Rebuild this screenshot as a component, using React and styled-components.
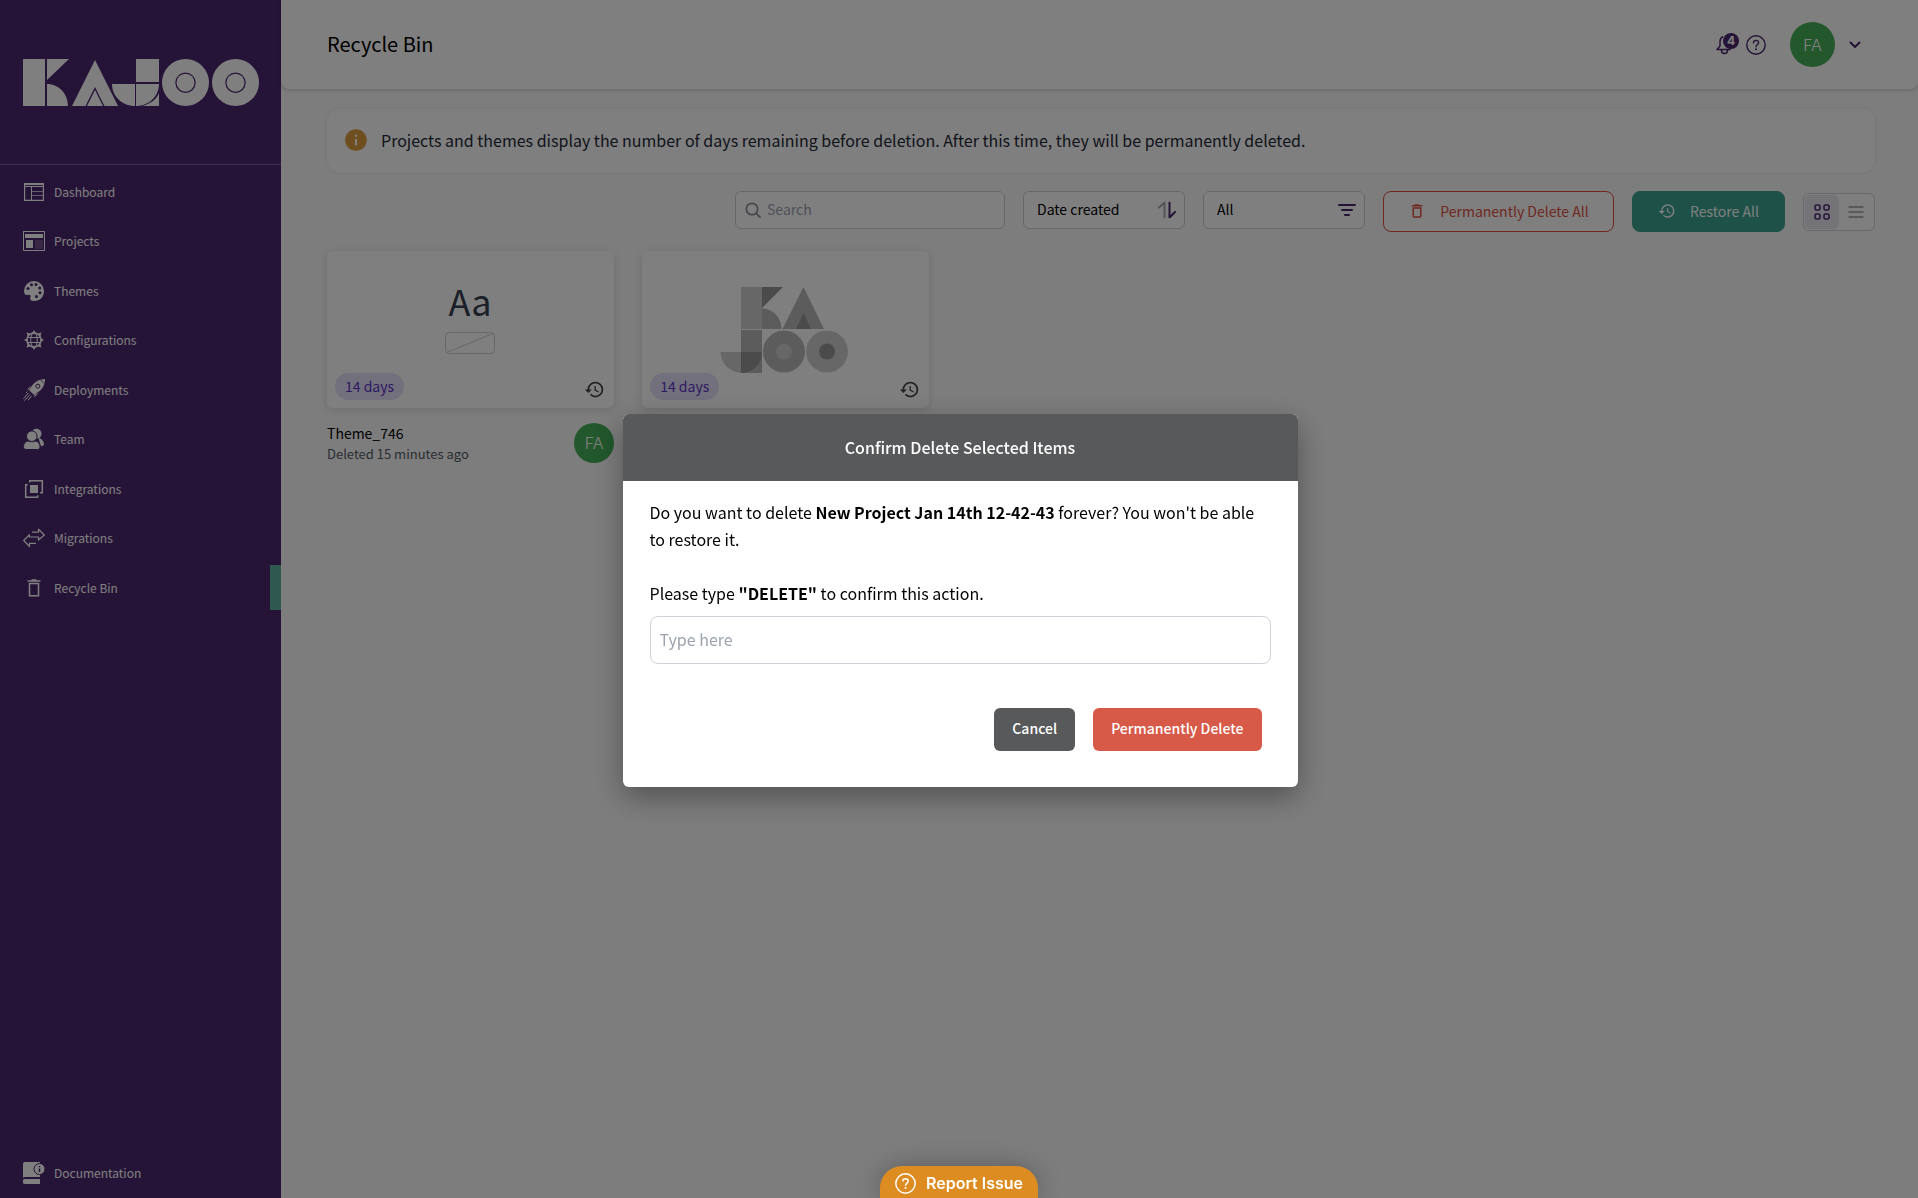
import React from 'react'
import styled, { createGlobalStyle } from 'styled-components'
import { MdHistory, MdInfo, MdOutlineDelete } from 'react-icons/md'

const GlobalStyle = createGlobalStyle`
  *,
  *::before,
  *::after {
    box-sizing: border-box;
  }
  body {
    margin: 0;
    background-color: #fafafa;
    color: #000;
    font-family: 'Noto Sans CJK JP', 'Noto Sans', sans-serif;
    font-size: 16px;
    line-height: 24px;
  }
  h1, h2, h3, p, ul {
    margin: 0;
    padding: 0;
  }
  button, input, select {
    font: inherit;
  }
  svg {
    display: block;
    flex-shrink: 0;
  }
`

const Layout = styled.div`
  display: flex;
  min-height: 100vh;
`

/* sidebar */

const Sidebar = styled.nav`
  display: flex;
  flex-direction: column;
  width: 281px;
  flex-shrink: 0;
  background-color: #4c2870;
  color: white;
`

const LogoBox = styled.div`
  height: 165px;
  padding: 59px 22px 0 23px;
  border-bottom: 1px solid #7e5a94;
`

const NavList = styled.ul`
  display: flex;
  flex-direction: column;
  justify-content: space-between;
  height: 441px;
  margin-top: 4px;
  list-style: none;
`

const NavLink = styled.a`
  display: flex;
  align-items: center;
  gap: 9px;
  height: 45px;
  padding-left: 23px;
  color: white;
  font-size: 12px;
  text-decoration: none;
  border-right: 11px solid ${(props) => (props.$active ? '#5eb29e' : 'transparent')};
`

const NavFooter = styled.div`
  margin-top: auto;
  padding-bottom: 3px;
`

/* page */

const Page = styled.div`
  flex: 1;
  min-width: 0;
`

const Header = styled.header`
  display: flex;
  align-items: center;
  height: 89px;
  padding: 0 57px 0 46px;
  background-color: white;
  border-radius: 0 0 8px 8px;
  box-shadow: 0 1px 4px rgba(0, 0, 0, 0.2);
`

const PageTitle = styled.h1`
  margin-right: auto;
  padding-bottom: 2px;
  font-size: 20px;
  font-weight: 400;
`

const IconButton = styled.button`
  position: relative;
  display: flex;
  padding: 0;
  border: 0;
  background: none;
  color: #4c2870;
  cursor: pointer;
`

const HeaderIcons = styled.div`
  display: flex;
  align-items: center;
  gap: 8px;
  margin-right: 24px;
`

const Badge = styled.span`
  position: absolute;
  top: -1px;
  right: -1px;
  width: 16px;
  height: 16px;
  border-radius: 50%;
  background-color: #4c2870;
  color: white;
  font-family: Inter, sans-serif;
  font-size: 12px;
  font-weight: 700;
  line-height: 16px;
  text-align: center;
`

const Avatar = styled.span`
  display: flex;
  align-items: center;
  justify-content: center;
  width: ${(props) => props.$size};
  height: ${(props) => props.$size};
  flex-shrink: 0;
  border-radius: 50%;
  background-color: #45b058;
  color: white;
  font-family: Inter, sans-serif;
  font-size: 16px;
  font-weight: 300;
`

const UserMenu = styled(IconButton)`
  align-items: center;
  gap: 14px;
`

const Content = styled.main`
  padding: 20px 43px 20px 46px;
`

const Notice = styled.div`
  display: flex;
  align-items: center;
  gap: 12px;
  height: 64px;
  padding: 0 16px 2px;
  background-color: white;
  border-radius: 14px;
  box-shadow: 0 0 4px rgba(0, 0, 0, 0.08);
  color: #1f2937;
  font-size: 16px;
`

const Toolbar = styled.div`
  display: flex;
  align-items: flex-start;
  justify-content: flex-end;
  gap: 18px;
  margin: 18px 0 19px;
  font-size: 14px;
`

const Field = styled.label`
  position: relative;
  width: ${(props) => props.$width};
  height: 38px;

  svg {
    position: absolute;
    top: 50%;
    transform: translateY(-50%);
    pointer-events: none;
    ${(props) => (props.$iconLeft ? 'left: 10px;' : 'right: 9px;')}
  }
`

const SearchInput = styled.input`
  width: 100%;
  height: 100%;
  padding: 0 12px 2px 31px;
  border: 1px solid #d1d1d4;
  border-radius: 6px;
  background-color: white;
  &::placeholder {
    color: #9ca3af;
    opacity: 1;
  }
`

const Select = styled.select`
  width: 100%;
  height: 100%;
  padding: 0 32px 2px 13px;
  appearance: none;
  border: 1px solid #d1d1d4;
  border-radius: 6px;
  background-color: white;
  color: black;
`

const ActionButton = styled.button`
  display: flex;
  align-items: center;
  justify-content: center;
  gap: 14px;
  width: ${(props) => props.$width};
  height: 41px;
  padding: 0 0 2px;
  border: 1px solid ${(props) => (props.$danger ? '#e04f3f' : '#3da592')};
  border-radius: 8px;
  background-color: ${(props) => (props.$danger ? 'white' : '#3da592')};
  color: ${(props) => (props.$danger ? '#e0503f' : 'white')};
  cursor: pointer;
`

const ViewToggle = styled.div`
  display: flex;
  align-self: center;
  width: 72px;
  height: 38px;
  padding: 1px;
  border: 1px solid #d1d1da;
  border-radius: 6px;
  background-color: white;
`

const ToggleButton = styled.button`
  display: flex;
  flex: 1;
  align-items: center;
  justify-content: center;
  padding: 0;
  border: 0;
  border-radius: 5px;
  background-color: ${(props) => (props.$active ? '#e9e8f0' : 'transparent')};
  color: ${(props) => (props.$active ? '#4c2870' : '#9c9aa8')};
`

const CardGrid = styled.div`
  display: grid;
  grid-template-columns: repeat(5, 1fr);
  gap: 28px;
`

const Card = styled.article`
  display: flex;
  flex-direction: column;
  height: 157px;
  padding: 8px 9px 8px 8px;
  background-color: white;
  border-radius: 6px;
  box-shadow: 0 2px 8px rgba(0, 0, 0, 0.12);
`

const Preview = styled.div`
  display: flex;
  flex: 1;
  flex-direction: column;
  align-items: center;
  gap: 8px;
  padding-top: ${(props) => props.$top};
  height: 0;
`

const FontSample = styled.span`
  color: #374151;
  font-size: 36px;
  line-height: 48px;
`

const CardFooter = styled.div`
  display: flex;
  align-items: flex-end;
  justify-content: space-between;
`

const DaysPill = styled.span`
  padding: 0 10px;
  border-radius: 14px;
  background-color: #e6e0fb;
  color: #5b34c4;
  font-size: 14px;
  line-height: 27px;
`

const RestoreButton = styled(IconButton)`
  color: #444;
`

const Caption = styled.div`
  display: flex;
  justify-content: space-between;
  margin-top: 15px;
`

const CaptionTitle = styled.h3`
  font-size: 14px;
  font-weight: 400;
  line-height: 20px;
`

const CaptionMeta = styled.p`
  color: #555b66;
  font-size: 13px;
  line-height: 22px;
`

/* dialog */

const Overlay = styled.div`
  position: fixed;
  inset: 0;
  display: flex;
  align-items: center;
  justify-content: center;
  padding: 2px 0 0 2px;
  background-color: rgba(0, 0, 0, 0.5);
  z-index: 10;
`

const Dialog = styled.section`
  width: 675px;
  overflow: hidden;
  border-radius: 6px;
  background-color: white;
  box-shadow: 0 10px 30px rgba(0, 0, 0, 0.35);
`

const DialogTitle = styled.h2`
  background-color: #58595b;
  color: white;
  font-size: 16px;
  font-weight: 500;
  line-height: 67px;
  text-align: center;
`

const DialogBody = styled.form`
  padding: 18px 27px 36px;
  line-height: 27px;
`

const ConfirmLabel = styled.label`
  display: block;
  margin-top: 27px;
`

const ConfirmInput = styled.input`
  width: 100%;
  height: 48px;
  margin-top: 9px;
  padding: 0 9px 2px;
  border: 1px solid #d1d1da;
  border-radius: 8px;
  &::placeholder {
    color: #9ca3af;
    opacity: 1;
  }
`

const DialogActions = styled.div`
  display: flex;
  justify-content: flex-end;
  gap: 18px;
  margin: 44px 9px 0 0;
`

const DialogButton = styled.button`
  height: 43px;
  padding: 0 18px 2px;
  border: 0;
  border-radius: 6px;
  background-color: ${(props) => (props.$danger ? '#d75a48' : '#58595b')};
  color: white;
  font-size: 14px;
  font-weight: 500;
  cursor: pointer;
`

const ReportButton = styled.button`
  position: fixed;
  bottom: 0;
  left: 50%;
  display: flex;
  align-items: center;
  gap: 10px;
  height: 32px;
  padding: 2px 15px 0;
  transform: translateX(-50%);
  border: 0;
  border-radius: 22px 22px 0 0;
  background-color: #dc8c20;
  box-shadow: 0 0 24px rgba(0, 0, 0, 0.25);
  color: white;
  font-family: Inter, sans-serif;
  font-size: 16px;
  font-weight: 600;
  white-space: nowrap;
  z-index: 20;
`

/* drawings */

const KajooLogo = () => (
  <svg width="236" height="47" viewBox="0 0 236 47" fill="white" role="img" aria-label="Kajoo">
    <path d="M0 0h22v47H0zM24 0h22L24 21zM24 25c12 0 21 10 21 22H24z" />
    <path d="M72 1l23 46H81.500L72 28 62.500 47H49z" />
    <path d="M72 31l8 16H64z" />
    <path d="M113 0h23v23h-23zM89 25h23v22C99 47 89 37 89 25zM113 25h23c0 12-10 22-23 22z" />
    <path d="M136 34v13h-17c8-2 14-6 17-13z" />
    <path
      fillRule="evenodd"
      d="M162.500 0a23.500 23.500 0 1 0 0 47a23.500 23.500 0 1 0 0-47zm0 13.500a10.200 10.200 0 1 1 0 20.400a10.200 10.200 0 1 1 0-20.400zM212.500 0a23.500 23.500 0 1 0 0 47a23.500 23.500 0 1 0 0-47zm0 13.500a10.200 10.200 0 1 1 0 20.400a10.200 10.200 0 1 1 0-20.400z"
    />
    <circle cx="162.500" cy="23.700" r="9" />
    <circle cx="212.500" cy="23.700" r="9" />
  </svg>
)

const KajooMark = () => (
  <svg width="130" height="86" viewBox="0 0 130 86" fill="#b8b8b8" aria-hidden="true">
    <path fill="#cfcfcf" d="M21 0h21v42H21z" />
    <path fill="#969696" d="M42 0h21L42 21z" />
    <path d="M42 21.500c11 0 19.500 9 19.500 20.500H42zM83.500 0L104 42H62.500z" />
    <path fill="#969696" d="M83.500 26L91 42H76z" />
    <path d="M21 43h21v43H21z" />
    <path fill="#cfcfcf" d="M.5 65H21v21C9 85 .5 76 .5 65z" />
    <path fill="#969696" d="M21 65h21c0 12-9 21-21 21z" />
    <circle cx="64" cy="64.500" r="21" />
    <circle cx="64" cy="64.500" r="8" fill="#cfcfcf" />
    <circle cx="107" cy="64.500" r="21" fill="#cfcfcf" />
    <circle cx="107" cy="64.500" r="8" fill="#969696" />
  </svg>
)

const NavIcon = ({ children }) => (
  <svg width="22" height="22" viewBox="0 0 22 22" fill="none" stroke="currentColor" aria-hidden="true">
    {children}
  </svg>
)

const DashboardIcon = () => (
  <NavIcon>
    <path strokeWidth="1.200" d="M1.600 2.600h18.800v16.800H1.600z" />
    <path strokeWidth="1" d="M2 3.500h18M2 5.500h18M8.500 6v13" />
    <path strokeWidth="0.700" d="M9 10.500h11M9 14.500h11" />
  </NavIcon>
)

const ProjectsIcon = () => (
  <NavIcon>
    <path strokeWidth="1" d="M.5 1.500h21v19H.500zM1 1.500h20" />
    <path fill="currentColor" stroke="none" d="M2 4h18v4H2zM3 10h7v8H3zM0 1h6v1H0z" />
    <path fill="currentColor" stroke="none" opacity="0.2" d="M12 10h8v9h-8z" />
  </NavIcon>
)

const ThemesIcon = () => (
  <NavIcon>
    <path
      fill="currentColor"
      stroke="none"
      d="M11 1a10 10 0 0 1 10 10c0 6-4 10-10 10-2.500 0-3.800-.8-3.800-2.500 0-1.500 1-2.500-.2-3.500-1.500-1-3 .8-4.500-.3C1.400 13.800 1 12.500 1 11A10 10 0 0 1 11 1z"
    />
    <g fill="#4c2870" stroke="none">
      <circle cx="5" cy="8.500" r="1.500" />
      <circle cx="8.500" cy="4.800" r="1.500" />
      <circle cx="13" cy="4.500" r="1.500" />
      <circle cx="16.700" cy="8" r="1.500" />
      <circle cx="17" cy="12.800" r="1.500" />
      <circle cx="13.500" cy="16.500" r="1.500" />
    </g>
  </NavIcon>
)

const ConfigurationsIcon = () => (
  <NavIcon>
    <circle cx="11" cy="11" r="7" strokeWidth="1.500" />
    <ellipse cx="11" cy="11" rx="3.300" ry="7" strokeWidth="1" />
    <path strokeWidth="1" d="M4.500 8.500h13M4.500 13.500h13" />
    <path
      fill="currentColor"
      stroke="none"
      d="M11 1l1.800 3H9.200zM11 21l1.800-3H9.200zM1 11l3-1.800v3.600zM21 11l-3-1.800v3.600zM3.600 3.600l3.500.9-2.600 2.600zM18.400 3.600l-.9 3.500-2.600-2.600zM3.600 18.400l.9-3.500 2.600 2.600zM18.400 18.400l-3.500-.9 2.600-2.600z"
    />
  </NavIcon>
)

const DeploymentsIcon = () => (
  <NavIcon>
    <path
      fill="currentColor"
      stroke="none"
      d="M22 0c.2 5-2 9.500-6 12.500L11 16l-5-5 3.500-5C12.500 2 17 0 22 0zM8 6.200L4 11l2-.7zM15.800 14L11 18.500l.7-2.700z"
    />
    <circle cx="14.800" cy="7.200" r="2" stroke="#4c2870" />
    <path stroke="#4c2870" strokeWidth="0.800" d="M17.500.8l3.700 3.700" />
    <path strokeWidth="1" d="M5.500 14L.500 19.500M7 15.500L1.500 21.500M8.500 17L5 21.200M4.500 12.500L3 14" />
  </NavIcon>
)

const TeamIcon = () => (
  <NavIcon>
    <g fill="currentColor" stroke="none">
      <circle cx="13.500" cy="5.800" r="5" />
      <path d="M15.500 10c3.500.5 5.500 3.500 5.500 7l-3 1.500z" />
    </g>
    <g fill="currentColor" stroke="#4c2870" strokeWidth="1">
      <circle cx="8.800" cy="8.200" r="5.300" />
      <path d="M.5 18.500c0-3 2-5.500 5-5.500 2 1 4.500 1 6.500 0 3 0 5 2.500 5 5.500 0 2-1 3-2.500 3H3C1.500 21.500.5 20.500.5 18.500z" />
    </g>
  </NavIcon>
)

const IntegrationsIcon = () => (
  <NavIcon>
    <path fill="currentColor" stroke="none" d="M7 7h8v8H7z" />
    <path strokeWidth="1.500" d="M6.700 4.500V2.700h12.600v12H17M4.700 6.700h-2v12.600h12v-2" />
  </NavIcon>
)

const MigrationsIcon = () => (
  <NavIcon>
    <path
      strokeWidth="1.200"
      strokeLinejoin="round"
      d="M9 5.200h6.500V2.300L21.300 8l-5.800 5v-3H6.500V7.800L.7 13.500l5.800 6v-3.200H13"
    />
  </NavIcon>
)

const BinIcon = () => (
  <NavIcon>
    <path strokeWidth="1.500" d="M6.500 6.500h9v12.200h-9zM4.500 4h13M8.500 3h5" />
  </NavIcon>
)

const DocsIcon = () => (
  <NavIcon>
    <path fill="currentColor" stroke="none" d="M2 0h15v15H3c-1.500 0-2.300.3-3 1V2C0 .8.8 0 2 0zM2 17h15v5H2a2.400 2.400 0 0 1 0-5z" />
    <circle cx="16.500" cy="7" r="5.500" fill="currentColor" stroke="#4c2870" strokeWidth="1" />
    <path stroke="#4c2870" strokeWidth="1.500" d="M16.500 6.500V10M16.500 4v1.200" />
  </NavIcon>
)

const BellIcon = () => (
  <svg width="22" height="22" viewBox="0 0 22 22" fill="none" stroke="currentColor" strokeWidth="1.500" aria-hidden="true">
    <path d="M7 2.500C5 3.500 4 5.500 4 8v4L1 15.500h13v-2" strokeLinejoin="round" />
    <path d="M5.500 15.500v1a3 3 0 0 0 6 0v-1" />
  </svg>
)

const HelpIcon = ({ size }) => (
  <svg width={size} height={size} viewBox="0 0 20 20" fill="none" stroke="currentColor" strokeWidth="1.400" aria-hidden="true">
    <circle cx="10" cy="10" r="9.200" />
    <path strokeLinecap="round" d="M7.500 7.700c0-1.500 1-2.300 2.500-2.300s2.600.9 2.600 2.300c0 1.800-2.500 2-2.500 4" />
    <circle cx="10" cy="14.300" r="1" fill="currentColor" stroke="none" />
  </svg>
)

const ChevronIcon = () => (
  <svg width="12" height="8" viewBox="0 0 12 8" fill="none" stroke="currentColor" strokeWidth="2" aria-hidden="true">
    <path strokeLinecap="round" strokeLinejoin="round" d="M1.500 1.500L6 6l4.500-4.500" />
  </svg>
)

const SearchIcon = () => (
  <svg width="16" height="18" viewBox="0 0 16 18" fill="none" stroke="#8a8d96" strokeWidth="1.700" strokeLinecap="round" aria-hidden="true">
    <circle cx="7" cy="8" r="5.700" />
    <path d="M11.200 12.400L15 16.200" />
  </svg>
)

const SortIcon = () => (
  <svg width="18" height="17" viewBox="0 0 18 17" fill="none" strokeWidth="2" strokeLinecap="round" strokeLinejoin="round" aria-hidden="true">
    <path stroke="#a8a5b0" d="M1 6l5.500-5v15" />
    <path stroke="#4c2870" d="M11.500 1v15l5.500-5.500" />
  </svg>
)

const FilterIcon = () => (
  <svg width="18" height="12" viewBox="0 0 18 12" fill="none" stroke="#4c2870" strokeWidth="2" strokeLinecap="round" aria-hidden="true">
    <path d="M1 1h16M4 6h10M7 11h4" />
  </svg>
)

const GridIcon = () => (
  <svg width="16" height="16" viewBox="0 0 16 16" fill="none" stroke="currentColor" strokeWidth="1.600" aria-hidden="true">
    <rect x="1" y="1" width="5" height="5" rx="1.500" />
    <rect x="10" y="1" width="5" height="5" rx="1.500" />
    <rect x="1" y="10" width="5" height="5" rx="1.500" />
    <rect x="10" y="10" width="5" height="5" rx="1.500" />
  </svg>
)

const ListIcon = () => (
  <svg width="16" height="12" viewBox="0 0 16 12" stroke="currentColor" strokeWidth="1.600" strokeLinecap="round" aria-hidden="true">
    <path d="M1 1h14M1 6h14M1 11h14" />
  </svg>
)

const EmptySwatch = () => (
  <svg width="50" height="22" viewBox="0 0 50 22" fill="none" stroke="#cfcfcf" aria-hidden="true">
    <rect x="0.500" y="0.500" width="49" height="21" rx="4" />
    <path d="M2 20.500L48 1.500" />
  </svg>
)

const links = [
  { text: 'Dashboard', Icon: DashboardIcon },
  { text: 'Projects', Icon: ProjectsIcon },
  { text: 'Themes', Icon: ThemesIcon },
  { text: 'Configurations', Icon: ConfigurationsIcon },
  { text: 'Deployments', Icon: DeploymentsIcon },
  { text: 'Team', Icon: TeamIcon },
  { text: 'Integrations', Icon: IntegrationsIcon },
  { text: 'Migrations', Icon: MigrationsIcon },
  { text: 'Recycle Bin', Icon: BinIcon, active: true },
]

const DeletedCard = ({ top, children }) => (
  <Card>
    <Preview $top={top}>{children}</Preview>
    <CardFooter>
      <DaysPill>14 days</DaysPill>
      <RestoreButton type="button" aria-label="Restore">
        <MdHistory size={21} />
      </RestoreButton>
    </CardFooter>
  </Card>
)

const App = () => (
  <>
    <GlobalStyle />
    <Layout>
      <Sidebar>
        <LogoBox>
          <KajooLogo />
        </LogoBox>
        <NavList>
          {links.map(({ text, Icon, active }) => (
            <li key={text}>
              <NavLink href="#" $active={active}>
                <Icon />
                {text}
              </NavLink>
            </li>
          ))}
        </NavList>
        <NavFooter>
          <NavLink href="#">
            <DocsIcon />
            Documentation
          </NavLink>
        </NavFooter>
      </Sidebar>

      <Page>
        <Header>
          <PageTitle>Recycle Bin</PageTitle>
          <HeaderIcons>
            <IconButton type="button" aria-label="Notifications">
              <BellIcon />
              <Badge>4</Badge>
            </IconButton>
            <IconButton type="button" aria-label="Help">
              <HelpIcon size={20} />
            </IconButton>
          </HeaderIcons>
          <UserMenu type="button" aria-label="Account">
            <Avatar $size="45px">FA</Avatar>
            <ChevronIcon />
          </UserMenu>
        </Header>

        <Content>
          <Notice>
            <MdInfo size={26} color="#dc9a3c" />
            Projects and themes display the number of days remaining before deletion. After this time, they will be
            permanently deleted.
          </Notice>

          <Toolbar>
            <Field $width="270px" $iconLeft>
              <SearchIcon />
              <SearchInput type="search" placeholder="Search" aria-label="Search" />
            </Field>
            <Field $width="162px">
              <Select aria-label="Sort by">
                <option>Date created</option>
              </Select>
              <SortIcon />
            </Field>
            <Field $width="162px">
              <Select aria-label="Filter">
                <option>All</option>
              </Select>
              <FilterIcon />
            </Field>
            <ActionButton type="button" $danger $width="231px">
              <MdOutlineDelete size={18} />
              Permanently Delete All
            </ActionButton>
            <ActionButton type="button" $width="153px">
              <MdHistory size={18} />
              Restore All
            </ActionButton>
            <ViewToggle>
              <ToggleButton type="button" aria-label="Grid view" $active>
                <GridIcon />
              </ToggleButton>
              <ToggleButton type="button" aria-label="List view">
                <ListIcon />
              </ToggleButton>
            </ViewToggle>
          </Toolbar>

          <CardGrid>
            <div>
              <DeletedCard top="17px">
                <FontSample>Aa</FontSample>
                <EmptySwatch />
              </DeletedCard>
              <Caption>
                <div>
                  <CaptionTitle>Theme_746</CaptionTitle>
                  <CaptionMeta>Deleted 15 minutes ago</CaptionMeta>
                </div>
                <Avatar $size="40px">FA</Avatar>
              </Caption>
            </div>
            <DeletedCard top="28px">
              <KajooMark />
            </DeletedCard>
          </CardGrid>
        </Content>
      </Page>
    </Layout>

    <Overlay>
      <Dialog role="dialog" aria-modal="true" aria-labelledby="dialog-title">
        <DialogTitle id="dialog-title">Confirm Delete Selected Items</DialogTitle>
        <DialogBody onSubmit={(e) => e.preventDefault()}>
          <p>
            Do you want to delete <b>New Project Jan 14th 12-42-43</b> forever? You won't be able to restore it.
          </p>
          <ConfirmLabel htmlFor="confirm">
            Please type <b>"DELETE"</b> to confirm this action.
          </ConfirmLabel>
          <ConfirmInput id="confirm" type="text" placeholder="Type here" />
          <DialogActions>
            <DialogButton type="button">Cancel</DialogButton>
            <DialogButton type="submit" $danger>
              Permanently Delete
            </DialogButton>
          </DialogActions>
        </DialogBody>
      </Dialog>
    </Overlay>

    <ReportButton type="button">
      <HelpIcon size={21} />
      Report Issue
    </ReportButton>
  </>
)

export default App
